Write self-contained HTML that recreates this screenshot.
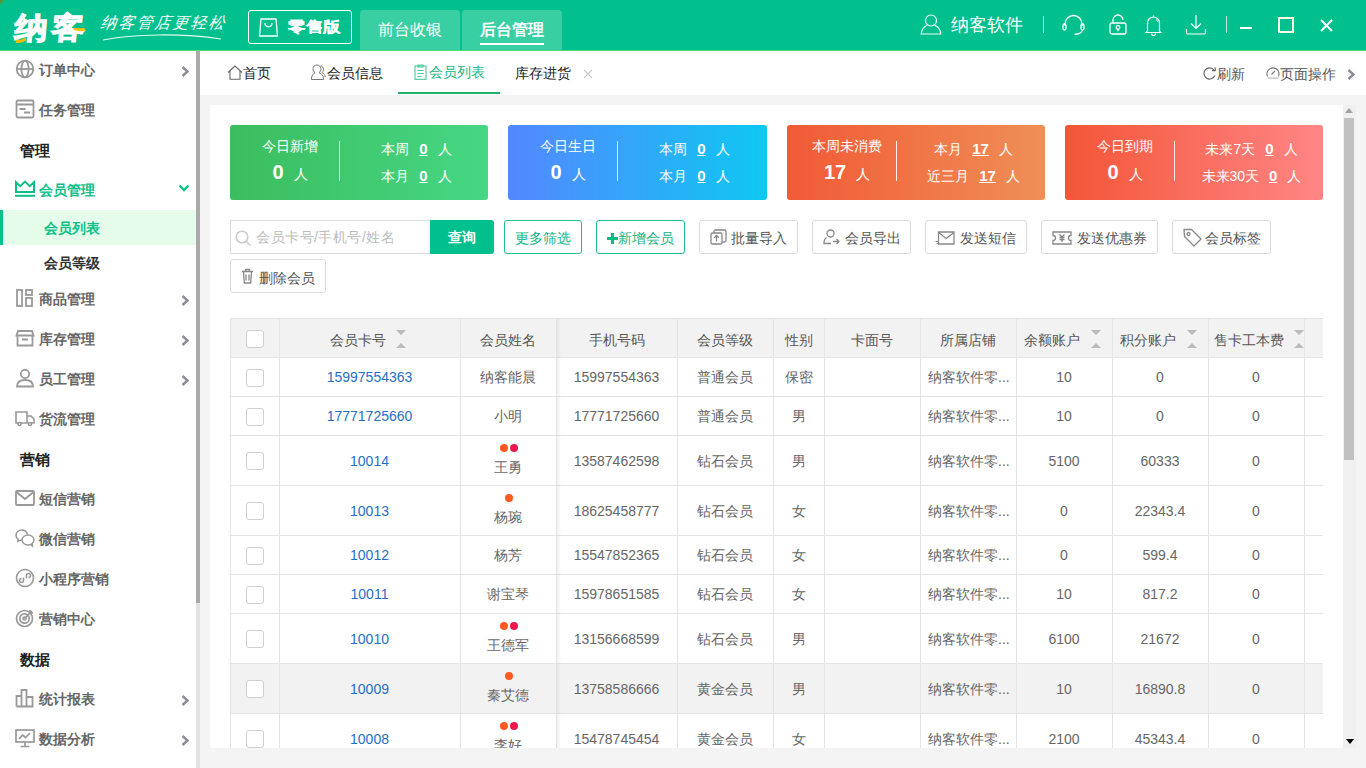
<!DOCTYPE html>
<html><head><meta charset="utf-8">
<style>
*{margin:0;padding:0;box-sizing:border-box}
html,body{width:1366px;height:768px;overflow:hidden;background:#f4f4f4;font-family:"Liberation Sans",sans-serif;}
.a{position:absolute}
.t{position:absolute;white-space:nowrap;line-height:1}
#hdr{left:0;top:0;width:1366px;height:51px;background:#01c08d;border-bottom:1px solid #4ddb85}
#side{left:0;top:51px;width:200px;height:717px;background:#fff}
#tabs{left:200px;top:51px;width:1166px;height:44px;background:#fff}
#card{left:210px;top:105px;width:1146px;height:643px;background:#fff;overflow:hidden;border-radius:3px 0 0 3px}
.si{position:absolute;left:0;width:196px;height:40px}
.si .tx{position:absolute;left:39px;top:12px;font-size:14px;font-weight:bold;color:#666;line-height:14px}
.si svg{position:absolute;left:15px;top:8px}
.si .ar{position:absolute;left:181px;top:15px}
.sec{position:absolute;left:20px;font-size:15px;font-weight:bold;color:#222;line-height:15px}
.sc{width:258px;height:75px;border-radius:3px;color:#fff}
.sct{position:absolute;left:0;width:120px;top:13px;text-align:center;font-size:14px;line-height:16px;white-space:nowrap}
.scn{position:absolute;left:0;width:120px;top:37px;text-align:center;white-space:nowrap;line-height:20px}
.scn b{font-size:20px;font-weight:bold;font-family:"Liberation Sans",sans-serif}
.scn span{font-size:14px;margin-left:10px}
.scd{position:absolute;left:109px;top:16px;width:1px;height:40px;background:rgba(255,255,255,.85)}
.scr{position:absolute;left:112px;width:149px;text-align:center;white-space:nowrap;font-size:14px;line-height:16px}
.scr u{margin:0 10px 0 10px;font-size:15px;font-weight:bold}
.th{font-size:14px;color:#555;text-align:center;line-height:14px}
.td{font-size:14px;color:#666;text-align:center;line-height:14px}
.lk{color:#1f6fc9}
.cb{width:18px;height:18px;border:1px solid #d0d0d0;border-radius:3px;background:#fff}
.dot{width:8px;height:8px;border-radius:50%}
</style></head><body>
<div id="hdr" class="a">
  <div class="a" style="left:0;top:0;width:4px;height:4px;background:linear-gradient(135deg,#6b8a1e,#03bf8c)"></div>
  <div class="t" style="left:15px;top:11px;font-size:33px;font-weight:bold;color:#fff;letter-spacing:4px;transform:scaleY(0.9) skewX(-4deg);-webkit-text-stroke:1.4px #fff">纳客</div>
  <svg class="a" style="left:14px;top:28px" width="76" height="16" viewBox="0 0 76 16"><path d="M2 13c3 1 7 0 10-2" stroke="#f5c000" stroke-width="3" fill="none"/><path d="M60 0c3 2 8 2 11 1" stroke="#f5c000" stroke-width="3" fill="none"/></svg>
  <div class="t" style="left:101px;top:15px;font-size:16px;color:#fff;font-style:italic;letter-spacing:2px;transform:skewX(-8deg)">纳客管店更轻松</div>
  <svg class="a" style="left:102px;top:33px" width="120" height="9" viewBox="0 0 120 9"><path d="M1 7C30 1 80 0 119 6" stroke="#e6f8f0" stroke-width="1.2" fill="none"/></svg>
  <div class="a" style="left:248px;top:10px;width:104px;height:34px;border:1px solid #fff;border-radius:3px"></div>
  <svg class="a" style="left:258px;top:18px" width="21" height="19" viewBox="0 0 21 19" fill="none" stroke="#fff" stroke-width="1.3"><path d="M3 1h15l1.5 17h-18z"/><path d="M7 5c0 5 7 5 7 0"/></svg>
  <div class="a" style="left:360px;top:10px;width:100px;height:40px;background:#38d0a3;border-radius:4px 4px 0 0"></div>
  <div class="a" style="left:462px;top:10px;width:100px;height:40px;background:#38d0a3;border-radius:4px 4px 0 0"></div>
  <div class="t" style="left:288px;top:19px;font-size:17px;font-weight:bold;color:#fff;-webkit-text-stroke:0.3px #fff;letter-spacing:0.5px;transform:scaleY(0.86);transform-origin:0 50%">零售版</div>
  <div class="t" style="left:378px;top:22px;font-size:16px;color:#fff">前台收银</div>
  <div class="t" style="left:480px;top:22px;font-size:16px;font-weight:bold;color:#fff">后台管理</div>
  <div class="a" style="left:480px;top:43px;width:64px;height:2px;background:#fff"></div>
  <svg class="a" style="left:920px;top:14px" width="22" height="21" viewBox="0 0 22 21" fill="none" stroke="#e8fff5" stroke-width="1.2"><circle cx="11" cy="6.5" r="5.5"/><path d="M7.5 11C4 12.5 1.5 16 1.2 20h19.6c-.3-4-2.8-7.5-6.3-9"/></svg>
  <div class="t" style="left:951px;top:16px;font-size:18px;color:#fff">纳客软件</div>
  <div class="a" style="left:1043px;top:16px;width:1px;height:17px;background:#b9eedb"></div>
  <svg class="a" style="left:1062px;top:14px" width="23" height="21" viewBox="0 0 23 21" fill="none" stroke="#fff" stroke-width="1.3"><path d="M3 12V10a8.5 8.5 0 0 1 17 0v2"/><rect x="1" y="10" width="3" height="6" rx="1.5"/><rect x="19" y="10" width="3" height="6" rx="1.5"/><path d="M20.5 16c-1 3-4 4.3-8 4.3"/></svg>
  <svg class="a" style="left:1109px;top:14px" width="18" height="21" viewBox="0 0 18 21" fill="none" stroke="#fff" stroke-width="1.3"><path d="M4 9V6a5 5 0 0 1 10 0"/><rect x="1" y="9" width="16" height="11" rx="2"/><circle cx="9" cy="13.5" r="1.8"/><path d="M9 15.3v2"/></svg>
  <svg class="a" style="left:1145px;top:14px" width="17" height="22" viewBox="0 0 17 22" fill="none" stroke="#fff" stroke-width="1.2"><path d="M8.5 1.5v1.5M2.5 17V9a6 6 0 0 1 12 0v8l1.5 1.5H1z"/><path d="M6.5 19.5a2 2 0 0 0 4 0"/><path d="M11 5.5c1 .5 1.5 1.5 1.8 2.5" stroke-width="1"/></svg>
  <svg class="a" style="left:1185px;top:14px" width="22" height="21" viewBox="0 0 22 21" fill="none" stroke="#fff" stroke-width="1.2"><path d="M11 1v13M6 9.5l5 5 5-5"/><path d="M1.5 15v3.5a1.5 1.5 0 0 0 1.5 1.5h16a1.5 1.5 0 0 0 1.5-1.5V15"/></svg>
  <div class="a" style="left:1226px;top:16px;width:1px;height:17px;background:#b9eedb"></div>
  <div class="a" style="left:1240px;top:27px;width:12px;height:2px;background:#fff"></div>
  <div class="a" style="left:1278px;top:17px;width:16px;height:16px;border:2px solid #fffbe6"></div>
  <svg class="a" style="left:1320px;top:19px" width="13" height="13" viewBox="0 0 13 13" fill="none" stroke="#fff" stroke-width="2"><path d="M1 1l11 11M12 1L1 12"/></svg>
</div>
<div id="side" class="a">
  <div class="a" style="left:196px;top:0;width:4px;height:552px;background:#aaa"></div>
  <div class="a" style="left:196px;top:552px;width:4px;height:165px;background:#e2e2e2"></div>
  <!-- 订单中心 -->
  <div class="si" style="top:0">
    <svg width="20" height="20" viewBox="0 0 20 20" fill="none" stroke="#999" stroke-width="1.8"><circle cx="10" cy="10" r="8.3"/><ellipse cx="10" cy="10" rx="3.6" ry="8.3"/><path d="M2 10h16"/></svg>
    <div class="tx">订单中心</div>
    <svg class="ar" width="8" height="11" viewBox="0 0 8 11" fill="none" stroke="#8c8c99" stroke-width="2.4"><path d="M1.5 1l5 4.5-5 4.5"/></svg>
  </div>
  <div class="si" style="top:40px">
    <svg width="20" height="20" viewBox="0 0 20 20" fill="none" stroke="#999" stroke-width="1.8"><rect x="1.5" y="1.5" width="17" height="17" rx="1.5"/><path d="M1.5 5.5h17M4.5 10h6M9 13.5h6"/></svg>
    <div class="tx">任务管理</div>
  </div>
  <div class="sec" style="top:92px">管理</div>
  <div class="si" style="top:120px">
    <svg width="20" height="19" viewBox="0 0 20 19" fill="none" stroke="#10bf88" stroke-width="2"><path d="M1 3.2L5.2 7.2L10 2.6L14.8 7.2L19 3.2V13H1z" stroke-linejoin="miter"/><path d="M0 16.8h20"/></svg>
    <div class="tx" style="color:#10bf88">会员管理</div>
    <svg class="a" style="left:178px;top:13px" width="12" height="8" viewBox="0 0 12 8" fill="none" stroke="#10bf88" stroke-width="2.4"><path d="M1.5 1.5l4.5 4.5 4.5-4.5"/></svg>
  </div>
  <div class="a" style="left:0;top:159px;width:196px;height:35px;background:#e5fcea;border-left:3px solid #07c08a"></div>
  <div class="t" style="left:44px;top:170px;font-size:14px;font-weight:bold;color:#10bf88">会员列表</div>
  <div class="t" style="left:44px;top:205px;font-size:14px;font-weight:bold;color:#333">会员等级</div>
  <div class="si" style="top:229px">
    <svg width="20" height="20" viewBox="0 0 20 20" fill="none" stroke="#999" stroke-width="1.8"><rect x="2" y="2" width="5" height="16"/><rect x="11" y="2" width="6" height="5"/><rect x="11" y="10" width="6" height="8"/></svg>
    <div class="tx">商品管理</div>
    <svg class="ar" width="8" height="11" viewBox="0 0 8 11" fill="none" stroke="#8c8c99" stroke-width="2.4"><path d="M1.5 1l5 4.5-5 4.5"/></svg>
  </div>
  <div class="si" style="top:269px">
    <svg width="20" height="20" viewBox="0 0 20 20" fill="none" stroke="#999" stroke-width="1.8"><path d="M3 3h14l1.5 4.5h-17z"/><path d="M2.5 7.5v10h15v-10M7 11.5h6"/></svg>
    <div class="tx">库存管理</div>
    <svg class="ar" width="8" height="11" viewBox="0 0 8 11" fill="none" stroke="#8c8c99" stroke-width="2.4"><path d="M1.5 1l5 4.5-5 4.5"/></svg>
  </div>
  <div class="si" style="top:309px">
    <svg width="20" height="20" viewBox="0 0 20 20" fill="none" stroke="#999" stroke-width="1.8"><circle cx="10" cy="6" r="4.2"/><path d="M2 18.5c0-4.5 3.5-6.5 8-6.5s8 2 8 6.5z"/></svg>
    <div class="tx">员工管理</div>
    <svg class="ar" width="8" height="11" viewBox="0 0 8 11" fill="none" stroke="#8c8c99" stroke-width="2.4"><path d="M1.5 1l5 4.5-5 4.5"/></svg>
  </div>
  <div class="si" style="top:349px">
    <svg width="20" height="20" viewBox="0 0 20 20" fill="none" stroke="#999" stroke-width="1.6"><path d="M1 4h11v11H1zM12 8h4l3 3v4h-7"/><circle cx="4.5" cy="16" r="1.5" fill="#fff"/><circle cx="15" cy="16" r="1.5" fill="#fff"/></svg>
    <div class="tx">货流管理</div>
  </div>
  <div class="sec" style="top:401px">营销</div>
  <div class="si" style="top:429px">
    <svg width="20" height="20" viewBox="0 0 20 20" fill="none" stroke="#999" stroke-width="1.8"><rect x="1" y="3" width="18" height="14" rx="1"/><path d="M1.5 4l8.5 7 8.5-7"/></svg>
    <div class="tx">短信营销</div>
  </div>
  <div class="si" style="top:469px">
    <svg width="20" height="20" viewBox="0 0 20 20" fill="none" stroke="#999" stroke-width="1.5"><path d="M12.5 6.5C11.8 3.8 9.5 2 6.8 2 3.6 2 1 4.3 1 7.2c0 1.7.9 3.1 2.2 4.1L2.8 13.5l2.6-1.3c.5.1 1 .2 1.5.2"/><ellipse cx="13" cy="12" rx="6" ry="5"/><path d="M15.5 16.5l2 1.5-.3-2.5"/></svg>
    <div class="tx">微信营销</div>
  </div>
  <div class="si" style="top:509px">
    <svg width="20" height="20" viewBox="0 0 20 20" fill="none" stroke="#999" stroke-width="1.6"><circle cx="10" cy="10" r="8.5"/><path d="M8.5 9.5v3a2 2 0 1 1-2-2M11.5 10.5v-3a2 2 0 1 1 2 2"/></svg>
    <div class="tx">小程序营销</div>
  </div>
  <div class="si" style="top:549px">
    <svg width="20" height="20" viewBox="0 0 20 20" fill="none" stroke="#999" stroke-width="1.7"><circle cx="9.5" cy="10.5" r="8"/><circle cx="9.5" cy="10.5" r="4.7"/><circle cx="9.5" cy="10.5" r="1.5"/><path d="M9.5 10.5L17 3M15 2v3h3"/></svg>
    <div class="tx">营销中心</div>
  </div>
  <div class="sec" style="top:601px">数据</div>
  <div class="si" style="top:629px">
    <svg width="20" height="20" viewBox="0 0 20 20" fill="none" stroke="#999" stroke-width="1.8"><path d="M1.5 18.5V8h5v10.5M6.5 18.5V2h5v16.5M11.5 18.5V9h6v9.5zM1.5 18.5h16"/></svg>
    <div class="tx">统计报表</div>
    <svg class="ar" width="8" height="11" viewBox="0 0 8 11" fill="none" stroke="#8c8c99" stroke-width="2.4"><path d="M1.5 1l5 4.5-5 4.5"/></svg>
  </div>
  <div class="si" style="top:669px">
    <svg width="20" height="20" viewBox="0 0 20 20" fill="none" stroke="#999" stroke-width="1.7"><rect x="1" y="2" width="18" height="12"/><path d="M4 11l3.5-4 3 2.5L15 5M10 14v4M5.5 18.5h9"/></svg>
    <div class="tx">数据分析</div>
    <svg class="ar" width="8" height="11" viewBox="0 0 8 11" fill="none" stroke="#8c8c99" stroke-width="2.4"><path d="M1.5 1l5 4.5-5 4.5"/></svg>
  </div>
</div>
<div id="tabs" class="a">
  <svg class="a" style="left:27px;top:14px" width="16" height="15" viewBox="0 0 16 15" fill="none" stroke="#666" stroke-width="1.1"><path d="M1 7.5L8 1l7 6.5M3 6v8.3h10V6"/></svg>
  <div class="t" style="left:43px;top:15px;font-size:14px;color:#222">首页</div>
  <svg class="a" style="left:110px;top:13px" width="17" height="17" viewBox="0 0 17 17" fill="none" stroke="#777" stroke-width="1"><path d="M5 8.8C3.6 7.8 3 6.3 3 4.8 3 2.6 4.8 1 7 1s4 1.6 4 3.8c0 1.5-.6 3-2 4 2.6.9 4.3 2.6 4.5 5.2v1.5H1.5V14c.2-2.6 1.9-4.3 3.5-5.2z"/><path d="M10.5 1.8c1.8.3 3 1.6 3 3.5 0 1.3-.5 2.4-1.5 3.2 1.8.9 3 2.4 3.3 4.5"/></svg>
  <div class="t" style="left:127px;top:15px;font-size:14px;color:#222">会员信息</div>
  <svg class="a" style="left:214px;top:13px" width="13" height="16" viewBox="0 0 13 16" fill="none" stroke="#47c99a" stroke-width="1.1"><rect x="1" y="2" width="11" height="13.3"/><path d="M4 1h5v2H4zM3.5 6.5h6M3.5 9.5h6M3.5 12.5h4"/></svg>
  <div class="t" style="left:229px;top:14px;font-size:14px;color:#12b880">会员列表</div>
  <div class="a" style="left:198px;top:41px;width:102px;height:2px;background:#1fb26b"></div>
  <div class="t" style="left:315px;top:15px;font-size:14px;color:#222">库存进货</div>
  <svg class="a" style="left:383px;top:18px" width="10" height="10" viewBox="0 0 10 10" fill="none" stroke="#c8c8c8" stroke-width="1.1"><path d="M1 1l8 8M9 1L1 9"/></svg>
  <svg class="a" style="left:1003px;top:16px" width="14" height="13" viewBox="0 0 14 13" fill="none" stroke="#666" stroke-width="1.2"><path d="M11.8 8.5A5.6 5.6 0 1 1 11 3"/><path d="M9 3.6h3.2V0.5"/></svg>
  <div class="t" style="left:1017px;top:16px;font-size:14px;color:#555">刷新</div>
  <svg class="a" style="left:1066px;top:14px" width="14" height="15" viewBox="0 0 14 15" fill="none" stroke="#777" stroke-width="1.1"><path d="M1.6 11.5A6 6 0 1 1 12.4 11.5"/><path d="M5.5 9.5l3.5-3.5"/><path d="M1.5 13.2h11" stroke="#c8c8c8" stroke-width="1.5"/></svg>
  <div class="t" style="left:1080px;top:16px;font-size:14px;color:#555">页面操作</div>
  <svg class="a" style="left:1147px;top:18px" width="8" height="11" viewBox="0 0 8 11" fill="none" stroke="#8c8c99" stroke-width="2.4"><path d="M1.5 1l5 4.5-5 4.5"/></svg>
</div>
<div id="card" class="a">
<div class="a sc" style="left:20px;top:20px;background:linear-gradient(90deg,#3bbd5e,#46d784)">
<div class="sct">今日新增</div>
<div class="scn"><b>0</b><span>人</span></div>
<div class="scd"></div>
<div class="scr" style="top:16px"><span>本周</span><u>0</u><span>人</span></div>
<div class="scr" style="top:43px"><span>本月</span><u>0</u><span>人</span></div>
</div>
<div class="a sc" style="left:298px;top:20px;background:linear-gradient(90deg,#5487ff,#0ec8f2);width:259px">
<div class="sct">今日生日</div>
<div class="scn"><b>0</b><span>人</span></div>
<div class="scd"></div>
<div class="scr" style="top:16px"><span>本周</span><u>0</u><span>人</span></div>
<div class="scr" style="top:43px"><span>本月</span><u>0</u><span>人</span></div>
</div>
<div class="a sc" style="left:577px;top:20px;background:linear-gradient(90deg,#f15a36,#ef8f57)">
<div class="sct">本周未消费</div>
<div class="scn"><b>17</b><span>人</span></div>
<div class="scd"></div>
<div class="scr" style="top:16px"><span>本月</span><u>17</u><span>人</span></div>
<div class="scr" style="top:43px"><span>近三月</span><u>17</u><span>人</span></div>
</div>
<div class="a sc" style="left:855px;top:20px;background:linear-gradient(90deg,#f35637,#ff8585)">
<div class="sct">今日到期</div>
<div class="scn"><b>0</b><span>人</span></div>
<div class="scd"></div>
<div class="scr" style="top:16px"><span>未来7天</span><u>0</u><span>人</span></div>
<div class="scr" style="top:43px"><span>未来30天</span><u>0</u><span>人</span></div>
</div>
<div class="a" style="left:20px;top:115px;width:200px;height:34px;border:1px solid #dcdcdc;border-right:0;background:#fff"></div>
<svg class="a" style="left:25px;top:125px" width="17" height="16" viewBox="0 0 17 16" fill="none" stroke="#ccc" stroke-width="1.6"><circle cx="7" cy="7" r="5.8"/><path d="M11.2 11.2l4.3 4.3"/></svg>
<div class="t" style="left:46px;top:125px;font-size:14px;color:#bbb;letter-spacing:0.5px">会员卡号/手机号/姓名</div>
<div class="a" style="left:220px;top:115px;width:64px;height:34px;background:#01c08d;border-radius:0 3px 3px 0"></div>
<div class="t" style="left:238px;top:125px;font-size:14px;color:#fff;font-weight:bold">查询</div>
<div class="a" style="left:294px;top:115px;width:78px;height:34px;border:1px solid #20c08d;border-radius:3px;background:#fff"></div>
<div class="t" style="left:305px;top:126px;font-size:14px;color:#10b47f">更多筛选</div>
<div class="a" style="left:386px;top:115px;width:89px;height:34px;border:1px solid #20c08d;border-radius:3px;background:#fff"></div>
<svg class="a" style="left:397px;top:128px" width="11" height="11" viewBox="0 0 11 11"><path d="M4 0h3v4h4v3H7v4H4V7H0V4h4z" fill="#10b981"/></svg>
<div class="t" style="left:408px;top:126px;font-size:14px;color:#10b47f">新增会员</div>
<div class="a" style="left:489px;top:115px;width:99px;height:34px;border:1px solid #dcdcdc;border-radius:3px;background:#fff"></div>
<svg class="a" style="left:500px;top:124px" width="17" height="16" viewBox="0 0 17 16" fill="none" stroke="#888" stroke-width="1.3"><rect x="1" y="4" width="11" height="11" rx="1.5"/><path d="M4 4V2.5Q4 1 5.5 1H14.5Q16 1 16 2.5V11.5Q16 13 14.5 13H12"/><path d="M6.5 12.5v-6M4.2 8.8l2.3-2.3 2.3 2.3"/></svg>
<div class="t" style="left:521px;top:126px;font-size:14px;color:#555">批量导入</div>
<div class="a" style="left:602px;top:115px;width:99px;height:34px;border:1px solid #dcdcdc;border-radius:3px;background:#fff"></div>
<svg class="a" style="left:613px;top:124px" width="17" height="16" viewBox="0 0 17 16" fill="none" stroke="#888" stroke-width="1.3"><circle cx="7.5" cy="4.5" r="3.5"/><path d="M3.5 8.5C2 9.5 1 11 1 13v1.5h7M10 12.5h6M13.5 10l2.5 2.5-2.5 2.5"/></svg>
<div class="t" style="left:635px;top:126px;font-size:14px;color:#555">会员导出</div>
<div class="a" style="left:715px;top:115px;width:102px;height:34px;border:1px solid #dcdcdc;border-radius:3px;background:#fff"></div>
<svg class="a" style="left:725px;top:126px" width="20" height="15" viewBox="0 0 20 15" fill="none" stroke="#888" stroke-width="1.3"><path d="M3.5 1h15.5v12H3.5z"/><path d="M3.5 1.5l7.75 6L19 1.5"/><path d="M0.5 10.5h3M1.5 12.5h2" stroke-width="1.1"/></svg>
<div class="t" style="left:750px;top:126px;font-size:14px;color:#555">发送短信</div>
<div class="a" style="left:831px;top:115px;width:117px;height:34px;border:1px solid #dcdcdc;border-radius:3px;background:#fff"></div>
<svg class="a" style="left:842px;top:126px" width="20" height="14" viewBox="0 0 20 14" fill="none" stroke="#888" stroke-width="1.3"><path d="M1 1h18v3.5a2.5 2.5 0 0 0 0 5V13H1V9.5a2.5 2.5 0 0 0 0-5z"/><path d="M7.5 3.5L10 6l2.5-2.5M10 6v5M7.5 6.5h5M7.5 8.5h5"/></svg>
<div class="t" style="left:867px;top:126px;font-size:14px;color:#555">发送优惠券</div>
<div class="a" style="left:962px;top:115px;width:99px;height:34px;border:1px solid #dcdcdc;border-radius:3px;background:#fff"></div>
<svg class="a" style="left:973px;top:123px" width="19" height="19" viewBox="0 0 19 19" fill="none" stroke="#888" stroke-width="1.3"><path d="M1 1.5h7.5l9.5 9.5-7 7-9.5-9.5z" stroke-linejoin="round"/><circle cx="5.5" cy="6" r="1.5"/></svg>
<div class="t" style="left:995px;top:126px;font-size:14px;color:#555">会员标签</div>
<div class="a" style="left:20px;top:154px;width:96px;height:34px;border:1px solid #dcdcdc;border-radius:3px;background:#fff"></div>
<svg class="a" style="left:31px;top:163px" width="13" height="16" viewBox="0 0 13 16" fill="none" stroke="#888" stroke-width="1.3"><path d="M1 3.5h11M4.5 3.5V1.5h4v2M2.5 3.5l.8 11.5h6.4l.8-11.5M5 6.5v6M8 6.5v6"/></svg>
<div class="t" style="left:49px;top:166px;font-size:14px;color:#555">删除会员</div>
<div class="a" style="left:20px;top:213px;width:1093px;height:768px;overflow:hidden">
<div class="a" style="left:0;top:0;width:1093px;height:40px;background:#f2f2f2"></div>
<div class="a" style="left:0;top:345px;width:1093px;height:50px;background:#f2f2f2"></div>
<div class="a" style="left:0;top:0px;width:1093px;height:1px;background:#e4e4e4"></div>
<div class="a" style="left:0;top:39px;width:1093px;height:1px;background:#e4e4e4"></div>
<div class="a" style="left:0;top:78px;width:1093px;height:1px;background:#e4e4e4"></div>
<div class="a" style="left:0;top:117px;width:1093px;height:1px;background:#e4e4e4"></div>
<div class="a" style="left:0;top:167px;width:1093px;height:1px;background:#e4e4e4"></div>
<div class="a" style="left:0;top:217px;width:1093px;height:1px;background:#e4e4e4"></div>
<div class="a" style="left:0;top:256px;width:1093px;height:1px;background:#e4e4e4"></div>
<div class="a" style="left:0;top:295px;width:1093px;height:1px;background:#e4e4e4"></div>
<div class="a" style="left:0;top:345px;width:1093px;height:1px;background:#e4e4e4"></div>
<div class="a" style="left:0;top:395px;width:1093px;height:1px;background:#e4e4e4"></div>
<div class="a" style="left:0px;top:0;width:1px;height:768px;background:#e4e4e4"></div>
<div class="a" style="left:49px;top:0;width:1px;height:768px;background:#e4e4e4"></div>
<div class="a" style="left:230px;top:0;width:1px;height:768px;background:#e4e4e4"></div>
<div class="a" style="left:326px;top:0;width:1px;height:768px;background:#e4e4e4"></div>
<div class="a" style="left:447px;top:0;width:1px;height:768px;background:#e4e4e4"></div>
<div class="a" style="left:543px;top:0;width:1px;height:768px;background:#e4e4e4"></div>
<div class="a" style="left:594px;top:0;width:1px;height:768px;background:#e4e4e4"></div>
<div class="a" style="left:690px;top:0;width:1px;height:768px;background:#e4e4e4"></div>
<div class="a" style="left:786px;top:0;width:1px;height:768px;background:#e4e4e4"></div>
<div class="a" style="left:882px;top:0;width:1px;height:768px;background:#e4e4e4"></div>
<div class="a" style="left:978px;top:0;width:1px;height:768px;background:#e4e4e4"></div>
<div class="a" style="left:1074px;top:0;width:1px;height:768px;background:#e4e4e4"></div>
<div class="a" style="left:1093px;top:0;width:1px;height:768px;background:#e4e4e4"></div>
<div class="a" style="left:327px;top:0;width:4px;height:768px;background:linear-gradient(90deg,rgba(0,0,0,.06),rgba(0,0,0,0))"></div>
<div class="t th" style="left:100px;top:15px;text-align:left">会员卡号</div>
<div class="t th" style="left:230px;width:96px;top:15px">会员姓名</div>
<div class="t th" style="left:326px;width:121px;top:15px">手机号码</div>
<div class="t th" style="left:447px;width:96px;top:15px">会员等级</div>
<div class="t th" style="left:543px;width:51px;top:15px">性别</div>
<div class="t th" style="left:594px;width:96px;top:15px">卡面号</div>
<div class="t th" style="left:690px;width:96px;top:15px">所属店铺</div>
<div class="t th" style="left:794px;top:15px;text-align:left">余额账户</div>
<div class="t th" style="left:890px;top:15px;text-align:left">积分账户</div>
<div class="t th" style="left:984px;top:15px;text-align:left">售卡工本费</div>
<svg class="a" style="left:166px;top:12px" width="10" height="18" viewBox="0 0 10 18"><path d="M0 0h10L5 5z M0 18h10L5 13z" fill="#bbb"/></svg>
<svg class="a" style="left:861px;top:12px" width="10" height="18" viewBox="0 0 10 18"><path d="M0 0h10L5 5z M0 18h10L5 13z" fill="#bbb"/></svg>
<svg class="a" style="left:957px;top:12px" width="10" height="18" viewBox="0 0 10 18"><path d="M0 0h10L5 5z M0 18h10L5 13z" fill="#bbb"/></svg>
<svg class="a" style="left:1064px;top:12px" width="10" height="18" viewBox="0 0 10 18"><path d="M0 0h10L5 5z M0 18h10L5 13z" fill="#bbb"/></svg>
<div class="a cb" style="left:16px;top:12px"></div>
<div class="a cb" style="left:16px;top:51px"></div>
<div class="a cb" style="left:16px;top:90px"></div>
<div class="a cb" style="left:16px;top:134px"></div>
<div class="a cb" style="left:16px;top:184px"></div>
<div class="a cb" style="left:16px;top:229px"></div>
<div class="a cb" style="left:16px;top:268px"></div>
<div class="a cb" style="left:16px;top:312px"></div>
<div class="a cb" style="left:16px;top:362px"></div>
<div class="a cb" style="left:16px;top:412px"></div>
<div class="t td lk" style="left:49px;width:181px;top:52px">15997554363</div>
<div class="t td" style="left:230px;width:96px;top:52px">纳客能晨</div>
<div class="t td" style="left:326px;width:121px;top:52px">15997554363</div>
<div class="t td" style="left:447px;width:96px;top:52px">普通会员</div>
<div class="t td" style="left:543px;width:51px;top:52px">保密</div>
<div class="t td" style="left:698px;top:52px;text-align:left">纳客软件零...</div>
<div class="t td" style="left:786px;width:96px;top:52px">10</div>
<div class="t td" style="left:882px;width:96px;top:52px">0</div>
<div class="t td" style="left:978px;width:96px;top:52px">0</div>
<div class="t td lk" style="left:49px;width:181px;top:91px">17771725660</div>
<div class="t td" style="left:230px;width:96px;top:91px">小明</div>
<div class="t td" style="left:326px;width:121px;top:91px">17771725660</div>
<div class="t td" style="left:447px;width:96px;top:91px">普通会员</div>
<div class="t td" style="left:543px;width:51px;top:91px">男</div>
<div class="t td" style="left:698px;top:91px;text-align:left">纳客软件零...</div>
<div class="t td" style="left:786px;width:96px;top:91px">10</div>
<div class="t td" style="left:882px;width:96px;top:91px">0</div>
<div class="t td" style="left:978px;width:96px;top:91px">0</div>
<div class="t td lk" style="left:49px;width:181px;top:136px">10014</div>
<div class="a dot" style="left:270px;top:126px;background:#ff5a1f"></div>
<div class="a dot" style="left:280px;top:126px;background:#e8194b"></div>
<div class="t td" style="left:230px;width:96px;top:142px">王勇</div>
<div class="t td" style="left:326px;width:121px;top:136px">13587462598</div>
<div class="t td" style="left:447px;width:96px;top:136px">钻石会员</div>
<div class="t td" style="left:543px;width:51px;top:136px">男</div>
<div class="t td" style="left:698px;top:136px;text-align:left">纳客软件零...</div>
<div class="t td" style="left:786px;width:96px;top:136px">5100</div>
<div class="t td" style="left:882px;width:96px;top:136px">60333</div>
<div class="t td" style="left:978px;width:96px;top:136px">0</div>
<div class="t td lk" style="left:49px;width:181px;top:186px">10013</div>
<div class="a dot" style="left:275px;top:176px;background:#ff5a1f"></div>
<div class="t td" style="left:230px;width:96px;top:192px">杨琬</div>
<div class="t td" style="left:326px;width:121px;top:186px">18625458777</div>
<div class="t td" style="left:447px;width:96px;top:186px">钻石会员</div>
<div class="t td" style="left:543px;width:51px;top:186px">女</div>
<div class="t td" style="left:698px;top:186px;text-align:left">纳客软件零...</div>
<div class="t td" style="left:786px;width:96px;top:186px">0</div>
<div class="t td" style="left:882px;width:96px;top:186px">22343.4</div>
<div class="t td" style="left:978px;width:96px;top:186px">0</div>
<div class="t td lk" style="left:49px;width:181px;top:230px">10012</div>
<div class="t td" style="left:230px;width:96px;top:230px">杨芳</div>
<div class="t td" style="left:326px;width:121px;top:230px">15547852365</div>
<div class="t td" style="left:447px;width:96px;top:230px">钻石会员</div>
<div class="t td" style="left:543px;width:51px;top:230px">女</div>
<div class="t td" style="left:698px;top:230px;text-align:left">纳客软件零...</div>
<div class="t td" style="left:786px;width:96px;top:230px">0</div>
<div class="t td" style="left:882px;width:96px;top:230px">599.4</div>
<div class="t td" style="left:978px;width:96px;top:230px">0</div>
<div class="t td lk" style="left:49px;width:181px;top:269px">10011</div>
<div class="t td" style="left:230px;width:96px;top:269px">谢宝琴</div>
<div class="t td" style="left:326px;width:121px;top:269px">15978651585</div>
<div class="t td" style="left:447px;width:96px;top:269px">钻石会员</div>
<div class="t td" style="left:543px;width:51px;top:269px">女</div>
<div class="t td" style="left:698px;top:269px;text-align:left">纳客软件零...</div>
<div class="t td" style="left:786px;width:96px;top:269px">10</div>
<div class="t td" style="left:882px;width:96px;top:269px">817.2</div>
<div class="t td" style="left:978px;width:96px;top:269px">0</div>
<div class="t td lk" style="left:49px;width:181px;top:314px">10010</div>
<div class="a dot" style="left:270px;top:304px;background:#ff5a1f"></div>
<div class="a dot" style="left:280px;top:304px;background:#e8194b"></div>
<div class="t td" style="left:230px;width:96px;top:320px">王德军</div>
<div class="t td" style="left:326px;width:121px;top:314px">13156668599</div>
<div class="t td" style="left:447px;width:96px;top:314px">钻石会员</div>
<div class="t td" style="left:543px;width:51px;top:314px">男</div>
<div class="t td" style="left:698px;top:314px;text-align:left">纳客软件零...</div>
<div class="t td" style="left:786px;width:96px;top:314px">6100</div>
<div class="t td" style="left:882px;width:96px;top:314px">21672</div>
<div class="t td" style="left:978px;width:96px;top:314px">0</div>
<div class="t td lk" style="left:49px;width:181px;top:364px">10009</div>
<div class="a dot" style="left:275px;top:354px;background:#ff5a1f"></div>
<div class="t td" style="left:230px;width:96px;top:370px">秦艾德</div>
<div class="t td" style="left:326px;width:121px;top:364px">13758586666</div>
<div class="t td" style="left:447px;width:96px;top:364px">黄金会员</div>
<div class="t td" style="left:543px;width:51px;top:364px">男</div>
<div class="t td" style="left:698px;top:364px;text-align:left">纳客软件零...</div>
<div class="t td" style="left:786px;width:96px;top:364px">10</div>
<div class="t td" style="left:882px;width:96px;top:364px">16890.8</div>
<div class="t td" style="left:978px;width:96px;top:364px">0</div>
<div class="t td lk" style="left:49px;width:181px;top:414px">10008</div>
<div class="a dot" style="left:270px;top:404px;background:#ff5a1f"></div>
<div class="a dot" style="left:280px;top:404px;background:#e8194b"></div>
<div class="t td" style="left:230px;width:96px;top:420px">李好</div>
<div class="t td" style="left:326px;width:121px;top:414px">15478745454</div>
<div class="t td" style="left:447px;width:96px;top:414px">黄金会员</div>
<div class="t td" style="left:543px;width:51px;top:414px">女</div>
<div class="t td" style="left:698px;top:414px;text-align:left">纳客软件零...</div>
<div class="t td" style="left:786px;width:96px;top:414px">2100</div>
<div class="t td" style="left:882px;width:96px;top:414px">45343.4</div>
<div class="t td" style="left:978px;width:96px;top:414px">0</div>
</div>
<div class="a" style="left:1133px;top:0;width:13px;height:643px;background:#f0f0f0"></div>
<div class="a" style="left:1134px;top:13px;width:10px;height:342px;background:#c1c1c1"></div>
<svg class="a" style="left:1135px;top:3px" width="8" height="5" viewBox="0 0 8 5"><path d="M0 5h8L4 0z" fill="#a3a3a3"/></svg>
<svg class="a" style="left:1136px;top:634px" width="8" height="5" viewBox="0 0 8 5"><path d="M0 0h8L4 5z" fill="#000"/></svg>
</div>
</body></html>
